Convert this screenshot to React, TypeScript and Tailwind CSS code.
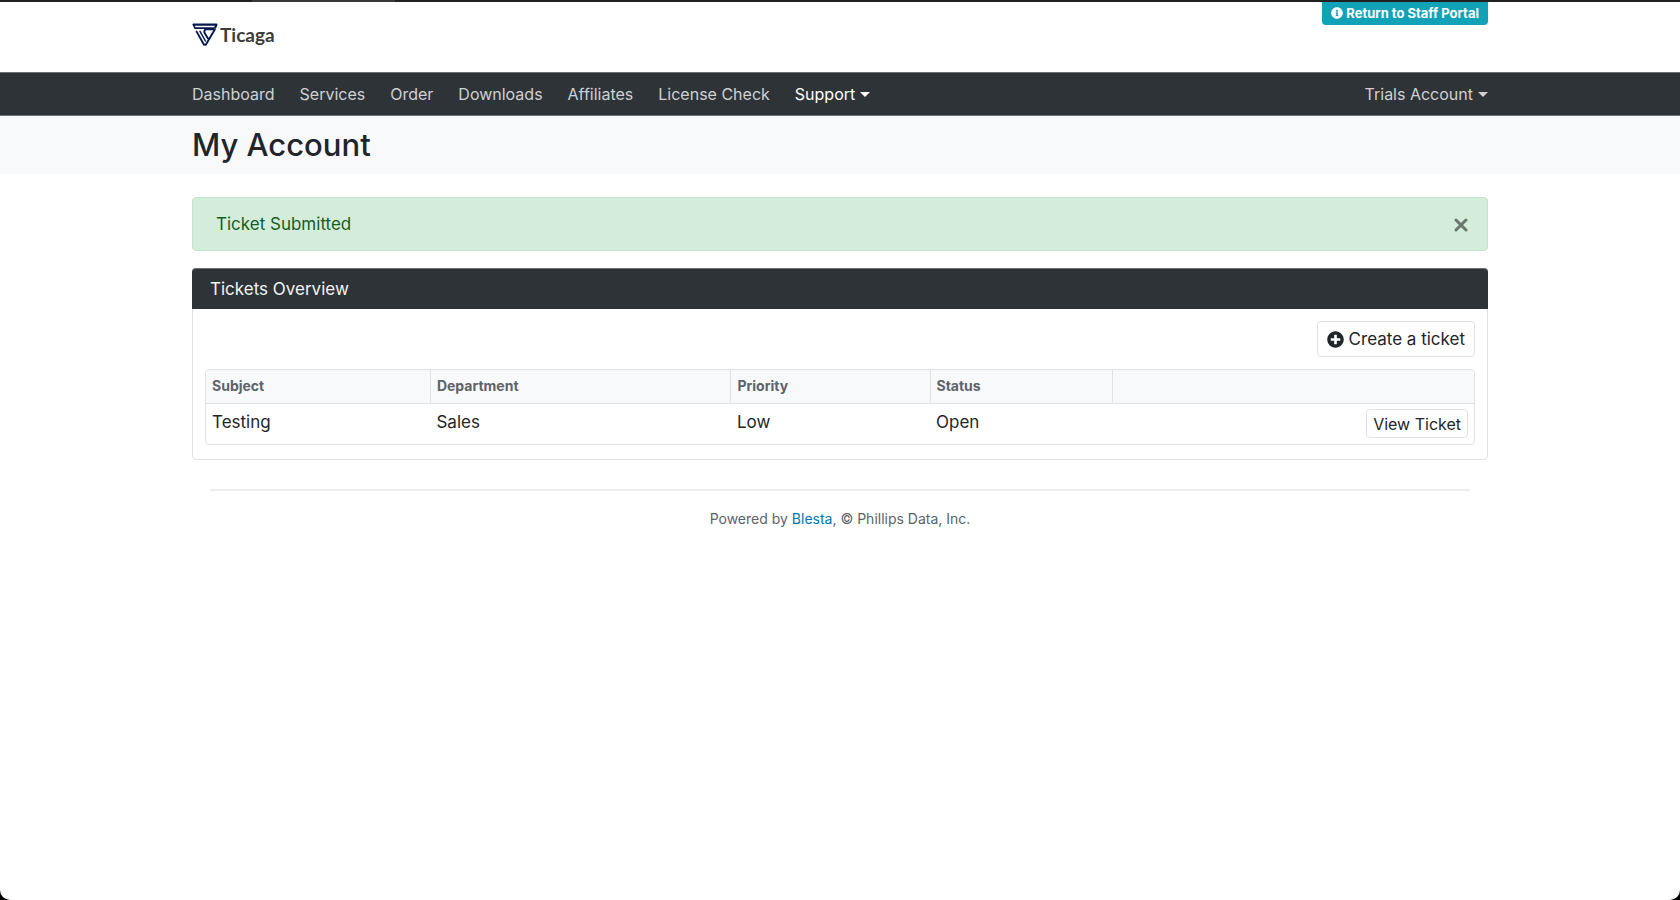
import React from "react";
import { FaInfoCircle, FaPlusCircle } from "react-icons/fa";

const links = ["Dashboard", "Services", "Order", "Downloads", "Affiliates", "License Check"];
const headings = ["Subject", "Department", "Priority", "Status"];
const shell = "mx-auto w-full max-w-[1296px]";

function Caret() {
  return <span className="mb-[2px] ml-[5px] inline-block border-x-[5px] border-t-[5px] border-x-transparent border-t-current align-middle" />;
}

function Logo() {
  return (
    <svg viewBox="0 0 26 24" className="h-6 w-[26px]" fill="none" stroke="#061a4d" strokeLinecap="round" strokeLinejoin="round" aria-hidden="true">
      <path d="M1.6 1.7H24.4L23.2 4.6" strokeWidth="2.2" />
      <path d="M1.6 1.7L3 5.2H21.6" strokeWidth="1.7" />
      <path d="M4.6 8.6L12 21.8H13.8L22.8 6.4H13.4Q11.4 8.4 13 10.8L16 15.6" strokeWidth="1.9" />
      <path d="M8 8.4L13.4 18" strokeWidth="1.5" />
    </svg>
  );
}

export default function App() {
  return (
    <div className="min-h-screen bg-black font-['Inter',sans-serif] text-[17px] leading-6 text-[#212529]">
      <div className="flex h-[2px] bg-[#222020]"><span className="ml-[15%] w-[8.5%] bg-[#3a3838]" /></div>
      <div className="min-h-[calc(100vh-2px)] rounded-b-[10px] bg-white">
        <header className={`${shell} flex h-[70px] items-start justify-between`}>
          <a href="#home" className="mt-[21px] flex items-center gap-[2px] font-['Lato',sans-serif] text-[19px] font-bold text-[#3c3c3b]">
            <Logo />
            Ticaga
          </a>
          <a href="#staff" className="flex h-[23px] items-center gap-[3px] rounded-b bg-[#12a2b8] px-[9px] pb-[2px] text-[13px] font-bold text-white">
            <FaInfoCircle className="size-3" />
            Return to Staff Portal
          </a>
        </header>
        <nav className="border-y border-[#6b6f72] bg-[#2e3338]">
          <div className={`${shell} flex h-[42px] items-center gap-[25px] text-[16px] text-[#cfd1d2]`}>
            {links.map((l) => (
              <a key={l} href="#nav">{l}</a>
            ))}
            <button type="button" className="text-white">Support<Caret /></button>
            <button type="button" className="ml-auto">Trials Account<Caret /></button>
          </div>
        </nav>
        <div className="bg-[#f8f9fb]">
          <h1 className={`${shell} flex h-[58px] items-center text-[31px] font-medium`}>My Account</h1>
        </div>
        <main className={`${shell} pt-[23px]`}>
          <div role="alert" className="mb-[17px] flex h-[54px] items-center justify-between rounded border border-[#c3e6cb] bg-[#d4edda] pr-[18px] pl-[23px] text-[#155d27]">
            Ticket Submitted
            <button type="button" aria-label="Close" className="text-[#6a776d]">
              <svg viewBox="0 0 16 16" className="size-4" fill="none" stroke="currentColor" strokeWidth="3" strokeLinecap="round">
                <path d="M3 4L13 14M13 4L3 14" />
              </svg>
            </button>
          </div>
          <section className="rounded border border-[#dfe1e6]">
            <h2 className="-mx-px -mt-px flex h-[41px] items-center rounded-t border-t border-[#6b6f72] bg-[#2e3338] px-[18px] text-[#f4f4f4]">Tickets Overview</h2>
            <div className="px-3 pt-3 pb-[14px]">
              <div className="mb-3 flex justify-end">
                <button type="button" className="flex h-9 items-center gap-[5px] rounded border border-[#dfe2e8] px-[9px]">
                  <FaPlusCircle className="size-[17px]" />
                  Create a ticket
                </button>
              </div>
              <div className="overflow-hidden rounded border border-[#e0e2e4]">
                <table className="w-full table-fixed border-collapse text-left">
                  <colgroup>
                    <col className="w-[17.7%]" />
                    <col className="w-[23.7%]" />
                    <col className="w-[15.7%]" />
                    <col className="w-[14.4%]" />
                    <col />
                  </colgroup>
                  <thead className="bg-[#f8f9fb] text-[14px] text-[#5c636a]">
                    <tr className="h-[33px] border-b border-[#e0e2e4]">
                      {headings.map((h) => (
                        <th key={h} scope="col" className="border-r border-[#e0e2e4] px-[6px] font-bold">{h}</th>
                      ))}
                      <td />
                    </tr>
                  </thead>
                  <tbody>
                    <tr className="h-[41px]">
                      <td className="px-[6px] pb-1">Testing</td>
                      <td className="px-[6px] pb-1">Sales</td>
                      <td className="px-[6px] pb-1">Low</td>
                      <td className="px-[6px] pb-1">Open</td>
                      <td className="px-[6px]">
                        <button type="button" className="ml-auto flex h-[29px] items-center rounded border border-[#dfe2e8] px-[6px] text-[16px]">View Ticket</button>
                      </td>
                    </tr>
                  </tbody>
                </table>
              </div>
            </div>
          </section>
          <footer className="mx-[18px] mt-[29px] border-t-2 border-[#eeeeef] pt-4 text-center text-[14px] text-[#5c636a]">
            Powered by <a href="#blesta" className="text-[#0077b3]">Blesta</a>, © Phillips Data, Inc.
          </footer>
        </main>
      </div>
    </div>
  );
}
